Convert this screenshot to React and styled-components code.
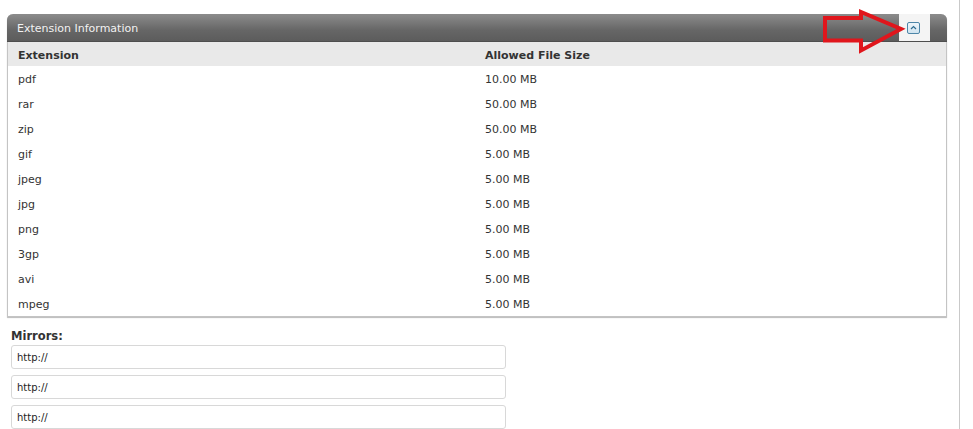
import React from "react";
import styled, { createGlobalStyle } from "styled-components";

const GlobalStyle = createGlobalStyle`
  html, body {
    margin: 0;
    padding: 0;
    background: #fff;
  }
  body {
    font-family: "DejaVu Sans", Verdana, sans-serif;
    color: #333;
  }
`;

const extensions = [
  { ext: "pdf", size: "10.00 MB" },
  { ext: "rar", size: "50.00 MB" },
  { ext: "zip", size: "50.00 MB" },
  { ext: "gif", size: "5.00 MB" },
  { ext: "jpeg", size: "5.00 MB" },
  { ext: "jpg", size: "5.00 MB" },
  { ext: "png", size: "5.00 MB" },
  { ext: "3gp", size: "5.00 MB" },
  { ext: "avi", size: "5.00 MB" },
  { ext: "mpeg", size: "5.00 MB" },
];

const Page = styled.div`
  width: 960px;
  height: 429px;
  border-right: 1px solid #c9c9c9;
  padding: 14px 0 0 7px;
  box-sizing: border-box;
  overflow: hidden;
`;

const Panel = styled.section`
  width: 938px;
  border: 1px solid #c4c4c4;
  border-top: none;
  border-radius: 6px 6px 0 0;
  box-shadow: 0 1px 1px #bbb;
`;

const Header = styled.header`
  position: relative;
  height: 27px;
  display: flex;
  align-items: center;
  justify-content: space-between;
  background: linear-gradient(#8c8c8c, #666 60%, #5c5c5c);
  border-radius: 6px 6px 0 0;
  border-bottom: 1px solid #4e4e4e;
  margin: 0 -1px;
  padding-left: 10px;
`;

const Title = styled.h3`
  margin: 0;
  padding-top: 2px;
  font-family: "DejaVu Sans", Verdana, sans-serif;
  font-size: 11px;
  font-weight: normal;
  color: #f2f2f2;
`;

const ToggleBox = styled.div`
  height: 100%;
  width: 31px;
  margin-right: 17px;
  background: #f4f4f4;
  display: flex;
  align-items: center;
  padding-left: 8px;
  box-sizing: border-box;
`;

const ToggleButton = styled.button`
  width: 13px;
  height: 12px;
  padding: 0;
  border: 1px solid #4d86a8;
  border-radius: 2px;
  background: linear-gradient(#eef6fb, #cfe3ef);
  display: flex;
  align-items: center;
  justify-content: center;
  cursor: pointer;
`;

const Arrow = styled.svg`
  position: absolute;
  left: 806px;
  top: -6px;
  overflow: visible;
`;

const Table = styled.table`
  width: 100%;
  border-collapse: collapse;
  font-size: 11px;
`;

const HeadCell = styled.th`
  text-align: left;
  font-weight: bold;
  background: #e9e9e9;
  color: #333;
  height: 24px;
  box-sizing: border-box;
  padding: 2px 0 0 10px;
  width: ${(p) => p.$width || "auto"};
`;

const Cell = styled.td`
  height: 25px;
  box-sizing: border-box;
  padding: 2px 0 0 10px;
  color: #333;
`;

const Mirrors = styled.div`
  padding: 12px 0 0 4px;
  display: flex;
  flex-direction: column;
  gap: 6px;
`;

const Label = styled.label`
  font-size: 11.5px;
  font-weight: bold;
  color: #333;
  margin-bottom: -4px;
`;

const Input = styled.input`
  width: 495px;
  height: 24px;
  box-sizing: border-box;
  border: 1px solid #d8d8d8;
  border-radius: 3px;
  padding: 0 5px;
  font-family: "DejaVu Sans", Verdana, sans-serif;
  font-size: 10px;
  color: #222;
  outline: none;
`;

export default function App() {
  return (
    <>
      <GlobalStyle />
      <Page>
        <Panel>
          <Header>
            <Title>Extension Information</Title>
            <ToggleBox>
              <ToggleButton aria-label="collapse">
                <svg width="7" height="5" viewBox="0 0 7 5">
                  <path d="M1 4 L3.5 1.5 L6 4" fill="none" stroke="#2f6d91" strokeWidth="1.2" />
                </svg>
              </ToggleButton>
            </ToggleBox>
            <Arrow width="95" height="50" viewBox="0 0 95 50">
              <path
                d="M12 10 H48 V4 L88 21 L48 42.5 V32.5 H12 Z"
                fill="none"
                stroke="#e0161c"
                strokeWidth="4"
                strokeLinejoin="miter"
              />
            </Arrow>
          </Header>
          <Table>
            <thead>
              <tr>
                <HeadCell $width="467px">Extension</HeadCell>
                <HeadCell>Allowed File Size</HeadCell>
              </tr>
            </thead>
            <tbody>
              {extensions.map((row) => (
                <tr key={row.ext}>
                  <Cell>{row.ext}</Cell>
                  <Cell>{row.size}</Cell>
                </tr>
              ))}
            </tbody>
          </Table>
        </Panel>
        <Mirrors>
          <Label>Mirrors:</Label>
          <Input defaultValue="http://" />
          <Input defaultValue="http://" />
          <Input defaultValue="http://" />
        </Mirrors>
      </Page>
    </>
  );
}
